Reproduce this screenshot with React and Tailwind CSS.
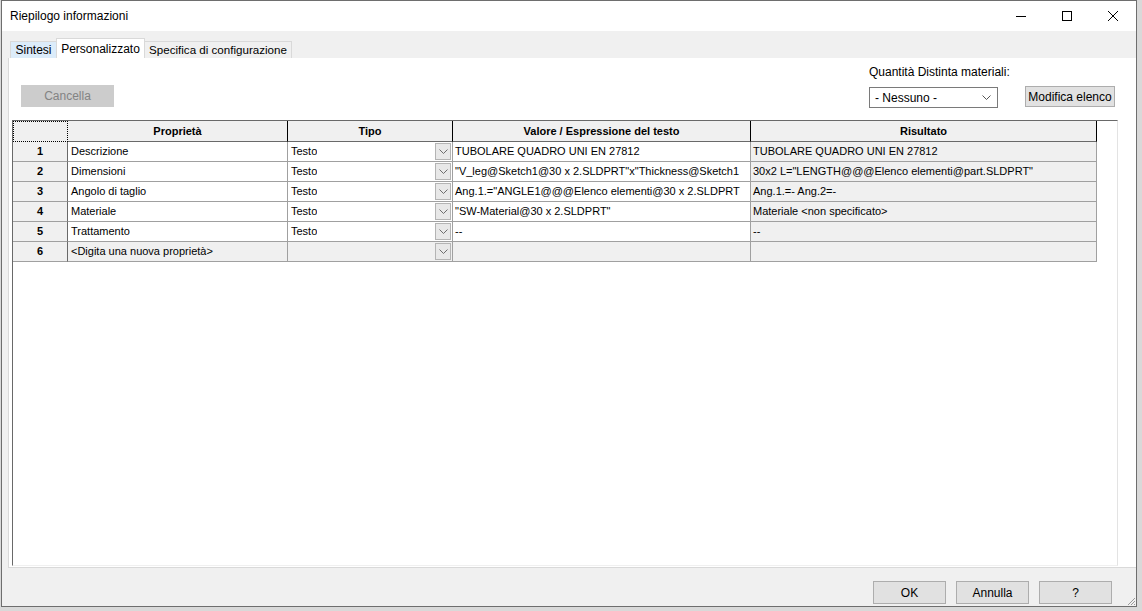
import React from 'react';

const rows = [
  { n: 1, name: 'Descrizione', tipo: 'Testo', value: 'TUBOLARE QUADRO UNI EN 27812', result: 'TUBOLARE QUADRO UNI EN 27812' },
  { n: 2, name: 'Dimensioni', tipo: 'Testo', value: '"V_leg@Sketch1@30 x 2.SLDPRT"x"Thickness@Sketch1', result: '30x2 L="LENGTH@@@Elenco elementi@part.SLDPRT"' },
  { n: 3, name: 'Angolo di taglio', tipo: 'Testo', value: 'Ang.1.="ANGLE1@@@Elenco elementi@30 x 2.SLDPRT', result: 'Ang.1.=- Ang.2=-' },
  { n: 4, name: 'Materiale', tipo: 'Testo', value: '"SW-Material@30 x 2.SLDPRT"', result: 'Materiale <non specificato>' },
  { n: 5, name: 'Trattamento', tipo: 'Testo', value: '--', result: '--' },
];

const Chevron = ({ className = '' }) => (
  <svg width="9" height="5" viewBox="0 0 9 5" className={className}>
    <path d="M0.5 0.5 L4.5 4.5 L8.5 0.5" fill="none" stroke="currentColor" strokeWidth="1" />
  </svg>
);

const WinButton = ({ children }) => (
  <button className="w-[73px] h-[23px] bg-[#e1e1e1] border border-[#adadad] text-[12px] text-black flex items-center justify-center">
    {children}
  </button>
);

const TipoCell = ({ text, grey }) => (
  <div className={`h-[20px] border-r border-b border-[#a0a0a0] ${grey ? 'bg-[#f0f0f0]' : 'bg-white'} flex items-center relative`}>
    <span className="pl-[3px] truncate">{text}</span>
    <div className="absolute right-px top-px bottom-px w-[16px] bg-[#e8e8e8] border border-[#b4b4b4] flex items-center justify-center text-[#6d6d6d]">
      <Chevron />
    </div>
  </div>
);

const Cell = ({ children, grey, className = '' }) => (
  <div className={`h-[20px] border-r border-b border-[#a0a0a0] ${grey ? 'bg-[#f0f0f0]' : 'bg-white'} flex items-center overflow-hidden whitespace-nowrap pl-[2px] ${className}`}>
    {children}
  </div>
);

export default function App() {
  return (
    <div className="w-[1142px] h-[611px] bg-[#d9d9d9] overflow-hidden font-['Liberation_Sans',Arial,sans-serif] text-black">
      <div className="ml-px w-[1136px] h-[607px] border border-[#6e6e6e] bg-[#f0f0f0] flex flex-col relative">
        {/* title bar */}
        <div className="h-[30px] bg-white flex items-center shrink-0">
          <span className="pl-[8px] text-[12px]">Riepilogo informazioni</span>
          <div className="ml-auto flex h-full">
            <div className="w-[46px] flex items-center justify-center">
              <svg width="10" height="10" viewBox="0 0 10 10"><path d="M0 5.5 H10" stroke="#000" strokeWidth="1" /></svg>
            </div>
            <div className="w-[46px] flex items-center justify-center">
              <svg width="10" height="10" viewBox="0 0 10 10"><rect x="0.5" y="0.5" width="9" height="9" fill="none" stroke="#000" strokeWidth="1" /></svg>
            </div>
            <div className="w-[46px] flex items-center justify-center">
              <svg width="10" height="10" viewBox="0 0 10 10"><path d="M0 0 L10 10 M10 0 L0 10" stroke="#000" strokeWidth="1" /></svg>
            </div>
          </div>
        </div>

        {/* tabs */}
        <div className="h-[27px] flex items-end pl-[8px] shrink-0 text-[12px]">
          <div className="w-[47px] h-[17px] bg-[#dcecfa] border border-b-0 border-[#d9d9d9] flex items-center justify-center">Sintesi</div>
          <div className="w-[89px] h-[20px] bg-white border border-b-0 border-[#d9d9d9] flex items-center justify-center -mx-px relative z-10">Personalizzato</div>
          <div className="w-[148px] h-[17px] bg-[#f0f0f0] border border-b-0 border-[#d9d9d9] flex items-center justify-center text-[11.6px] whitespace-nowrap">Specifica di configurazione</div>
        </div>

        {/* tab page */}
        <div className="ml-[6px] h-[510px] bg-white border-l border-b border-[#d9d9d9] flex flex-col shrink-0">
          <div className="h-[62px] flex justify-between pr-[21px] text-[12px]">
            <button className="mt-[27px] ml-[12px] w-[93px] h-[22px] bg-[#cccccc] text-[#838383]">Cancella</button>
            <div className="flex flex-col pt-[7px]">
              <span className="leading-[14px]">Quantità Distinta materiali:</span>
              <div className="flex gap-[27px] mt-[8px]">
                <div className="w-[129px] h-[21px] border border-[#7a7a7a] flex items-center pl-[5px] pr-[6px]">
                  <span>- Nessuno -</span>
                  <Chevron className="ml-auto text-[#555]" />
                </div>
                <div className="-mt-px w-[90px] h-[21px] bg-[#e1e1e1] border border-[#adadad] flex items-center justify-center">Modifica elenco</div>
              </div>
            </div>
          </div>

          {/* property grid */}
          <div className="ml-[3px] w-[1106px] h-[446px] border-t border-l border-[#696969] border-r border-r-[#e3e3e3] border-b border-b-[#f0f0f0] text-[11px]">
            <div className="grid grid-cols-[55px_220px_165px_298px_346px] w-[1084px]">
              <div className="h-[21px] bg-[#f0f0f0] border border-dotted border-black"></div>
              <div className="h-[21px] bg-[#f0f0f0] border-r border-black border-b border-b-[#696969] flex items-center justify-center font-bold">Proprietà</div>
              <div className="h-[21px] bg-[#f0f0f0] border-r border-black border-b border-b-[#696969] flex items-center justify-center font-bold">Tipo</div>
              <div className="h-[21px] bg-[#f0f0f0] border-r border-black border-b border-b-[#696969] flex items-center justify-center font-bold">Valore / Espressione del testo</div>
              <div className="h-[21px] bg-[#f0f0f0] border-r border-black border-b border-b-[#696969] flex items-center justify-center font-bold">Risultato</div>

              {rows.map((r) => (
                <React.Fragment key={r.n}>
                  <div className="h-[20px] bg-[#f0f0f0] border-r border-[#696969] border-b border-b-[#a0a0a0] flex items-center justify-center font-bold">{r.n}</div>
                  <Cell className="pl-[3px]">{r.name}</Cell>
                  <TipoCell text={r.tipo} />
                  <Cell>{r.value}</Cell>
                  <Cell grey>{r.result}</Cell>
                </React.Fragment>
              ))}
              <div className="h-[20px] bg-[#f0f0f0] border-r border-[#696969] border-b border-b-[#a0a0a0] flex items-center justify-center font-bold">6</div>
              <Cell grey className="pl-[3px]">&lt;Digita una nuova proprietà&gt;</Cell>
              <TipoCell text="" grey />
              <Cell grey></Cell>
              <Cell grey></Cell>
            </div>
          </div>
        </div>

        {/* bottom buttons */}
        <div className="flex-1 flex justify-end items-start gap-[10px] pt-[13px] pr-[24px]">
          <WinButton>OK</WinButton>
          <WinButton>Annulla</WinButton>
          <WinButton>?</WinButton>
        </div>

        <svg width="10" height="10" viewBox="0 0 10 10" className="absolute right-0 bottom-0">
          <path d="M9 2 L2 9 M9 5 L5 9 M9 8 L8 9" stroke="#9a9a9a" strokeWidth="1" />
        </svg>
      </div>
    </div>
  );
}
